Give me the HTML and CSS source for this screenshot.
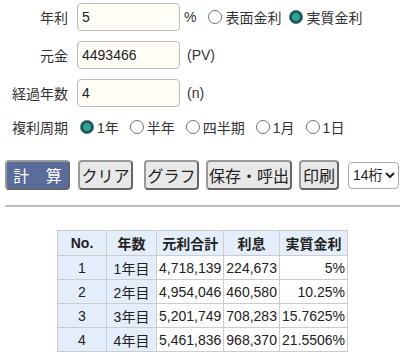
FILE: index.html
```html
<!DOCTYPE html>
<html>
<head>
    <title>複利計算</title>
    <link rel="stylesheet" href="styles.css">
</head>
<body>
    <!-- Input Form -->
    <div class="form">
        <div class="row">
            <span class="label">年利</span>
            <input type="text" class="field" value="5">
            <span class="unit">%</span>
            <label class="opt first"><input type="radio" name="kind">表面金利</label>
            <label class="opt"><input type="radio" name="kind" checked>実質金利</label>
        </div>
        <div class="row">
            <span class="label">元金</span>
            <input type="text" class="field" value="4493466">
            <span class="unit note">(PV)</span>
        </div>
        <div class="row">
            <span class="label">経過年数</span>
            <input type="text" class="field" value="4">
            <span class="unit note">(n)</span>
        </div>
        <div class="row period">
            <span class="label">複利周期</span>
            <label class="opt first"><input type="radio" name="period" checked>1年</label>
            <label class="opt"><input type="radio" name="period">半年</label>
            <label class="opt"><input type="radio" name="period">四半期</label>
            <label class="opt"><input type="radio" name="period">1月</label>
            <label class="opt"><input type="radio" name="period">1日</label>
        </div>
    </div>

    <!-- Buttons -->
    <div class="buttons">
        <button class="btn calc">計 算</button>
        <button class="btn clear">クリア</button>
        <button class="btn graph">グラフ</button>
        <button class="btn save">保存・呼出</button>
        <button class="btn print">印刷</button>
        <select class="digits">
            <option>14桁</option>
        </select>
    </div>

    <hr class="line">

    <!-- Result Table -->
    <table class="result">
        <tr>
            <th class="c1">No.</th>
            <th class="c2">年数</th>
            <th class="c3">元利合計</th>
            <th class="c4">利息</th>
            <th class="c5">実質金利</th>
        </tr>
        <tr><td class="key">1</td><td class="key">1年目</td><td>4,718,139</td><td>224,673</td><td class="num">5%</td></tr>
        <tr><td class="key">2</td><td class="key">2年目</td><td>4,954,046</td><td>460,580</td><td class="num">10.25%</td></tr>
        <tr><td class="key">3</td><td class="key">3年目</td><td>5,201,749</td><td>708,283</td><td class="num">15.7625%</td></tr>
        <tr><td class="key">4</td><td class="key">4年目</td><td>5,461,836</td><td>968,370</td><td class="num">21.5506%</td></tr>
    </table>
</body>
</html>
```

FILE: styles.css
```css
/* General */
body {
    font-family: "Liberation Sans", Arial, "Noto Sans CJK JP", sans-serif;
    font-size: 14px;
    color: #333;
    margin: 0;
    padding: 3px 6px 0 5px;
    background: #fff;
}

/* Form rows */
.row {
    display: flex;
    align-items: center;
    height: 28px;
    margin-bottom: 10px;
}

.row.period {
    height: 20px;
    margin-bottom: 23px;
}

.label {
    width: 63px;
    text-align: right;
    margin-right: 9px;
    flex-shrink: 0;
}

.field {
    width: 103px;
    height: 28px;
    box-sizing: border-box;
    border: 1px solid #bbb;
    border-radius: 4px;
    background: #fffdf6;
    padding: 0 4px;
    font-family: inherit;
    font-size: 14px;
    color: #222;
}

.unit {
    margin-left: 4px;
}

.note {
    margin-left: 7px;
}

.opt {
    display: flex;
    align-items: center;
    margin-left: 8px;
}

.opt.first {
    margin-left: 12px;
}

.opt input {
    width: 14px;
    height: 14px;
    margin: 0 3px 0 0;
    accent-color: #26a69a;
}

.period .opt {
    margin-left: 11px;
}

.period .opt.first {
    margin-left: 3px;
}

/* Buttons */
.buttons {
    display: flex;
    align-items: center;
    height: 30px;
}

.btn {
    height: 30px;
    box-sizing: border-box;
    font-family: inherit;
    font-size: 16px;
    color: #222;
    background: #e8e8e8;
    border: 2px solid #9a9a9a;
    border-right-color: #666;
    border-bottom-color: #666;
    border-radius: 4px;
    padding: 0;
    cursor: pointer;
}

.calc {
    width: 65px;
    background: #5a6c9c;
    color: #fff;
    letter-spacing: 6px;
    text-indent: 6px;
}

.clear { width: 55px; margin-left: 8px; }
.graph { width: 55px; margin-left: 11px; }
.save { width: 86px; margin-left: 7px; }
.print { width: 40px; margin-left: 7px; }

.digits {
    width: 51px;
    height: 27px;
    margin-left: 9px;
    font-family: inherit;
    font-size: 14px;
    border: 1px solid #aaa;
    border-radius: 4px;
    background: #fff;
    color: #222;
}

/* Divider */
.line {
    border: none;
    border-top: 2px solid #bbb;
    margin: 15px 0 23px 0;
}

/* Result table */
.result {
    border-collapse: collapse;
    margin: 0 auto;
    font-size: 14px;
    color: #222;
}

.result th,
.result td {
    border: 1px solid #ccc;
    height: 23px;
    padding: 0 2px;
    white-space: nowrap;
}

.result th {
    background: #e4eefa;
    height: 24px;
    font-weight: bold;
}

.result td.key {
    background: #e4eefa;
    text-align: center;
}

.result td.num {
    text-align: right;
}

.c1 { width: 44px; }
.c2 { width: 45px; }
.c3 { width: 61px; }
.c4 { width: 48px; }
.c5 { width: 59px; }
```
